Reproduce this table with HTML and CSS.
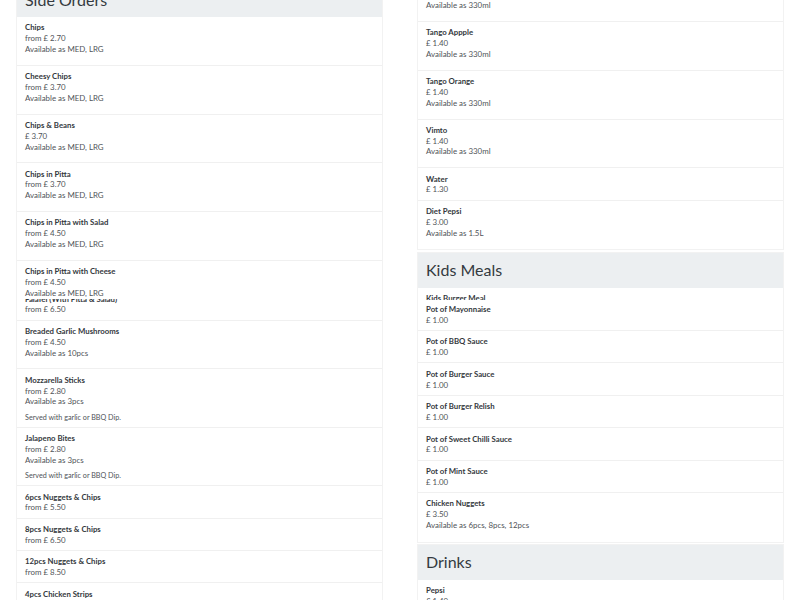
FILE: index.html
```html
<!DOCTYPE html>
<html lang="en">
<head>
<meta charset="utf-8">
<title>Menu</title>
<link rel="stylesheet" href="styles.css">
</head>
<body>
<div class="menu">
  <div class="col col-left">
    <section class="card">
      <h2 class="card-head">Side Orders</h2>
      <ul class="items">
        <li class="item"><div class="name">Chips</div><div class="price">from £ 2.70</div><div class="avail">Available as MED, LRG</div></li>
        <li class="item"><div class="name">Cheesy Chips</div><div class="price">from £ 3.70</div><div class="avail">Available as MED, LRG</div></li>
        <li class="item"><div class="name">Chips &amp; Beans</div><div class="price">£ 3.70</div><div class="avail">Available as MED, LRG</div></li>
        <li class="item"><div class="name">Chips in Pitta</div><div class="price">from £ 3.70</div><div class="avail">Available as MED, LRG</div></li>
        <li class="item"><div class="name">Chips in Pitta with Salad</div><div class="price">from £ 4.50</div><div class="avail">Available as MED, LRG</div></li>
        <li class="item item-cut"><div class="name">Chips in Pitta with Cheese</div><div class="price">from £ 4.50</div><div class="avail">Available as MED, LRG</div></li>
        <li class="item item-under"><div class="name">Falafel (With Pitta &amp; Salad)</div><div class="price">from £ 6.50</div></li>
        <li class="item"><div class="name">Breaded Garlic Mushrooms</div><div class="price">from £ 4.50</div><div class="avail">Available as 10pcs</div></li>
        <li class="item"><div class="name">Mozzarella Sticks</div><div class="price">from £ 2.80</div><div class="avail">Available as 3pcs</div><p class="desc">Served with garlic or BBQ Dip.</p></li>
        <li class="item"><div class="name">Jalapeno Bites</div><div class="price">from £ 2.80</div><div class="avail">Available as 3pcs</div><p class="desc">Served with garlic or BBQ Dip.</p></li>
        <li class="item"><div class="name">6pcs Nuggets &amp; Chips</div><div class="price">from £ 5.50</div></li>
        <li class="item"><div class="name">8pcs Nuggets &amp; Chips</div><div class="price">from £ 6.50</div></li>
        <li class="item"><div class="name">12pcs Nuggets &amp; Chips</div><div class="price">from £ 8.50</div></li>
        <li class="item"><div class="name">4pcs Chicken Strips</div><div class="price">from £ 4.50</div></li>
      </ul>
    </section>
  </div>
  <div class="col col-right">
    <section class="card">
      <ul class="items">
        <li class="item"><div class="name">7UP</div><div class="price">£ 1.40</div><div class="avail">Available as 330ml</div></li>
        <li class="item"><div class="name">Tango Appple</div><div class="price">£ 1.40</div><div class="avail">Available as 330ml</div></li>
        <li class="item"><div class="name">Tango Orange</div><div class="price">£ 1.40</div><div class="avail">Available as 330ml</div></li>
        <li class="item"><div class="name">Vimto</div><div class="price">£ 1.40</div><div class="avail">Available as 330ml</div></li>
        <li class="item"><div class="name">Water</div><div class="price">£ 1.30</div></li>
        <li class="item"><div class="name">Diet Pepsi</div><div class="price">£ 3.00</div><div class="avail">Available as 1.5L</div></li>
      </ul>
    </section>
    <section class="card">
      <h2 class="card-head">Kids Meals</h2>
      <ul class="items">
        <li class="item item-peek"><div class="name">Kids Burger Meal</div></li>
        <li class="item item-over"><div class="name">Pot of Mayonnaise</div><div class="price">£ 1.00</div></li>
        <li class="item"><div class="name">Pot of BBQ Sauce</div><div class="price">£ 1.00</div></li>
        <li class="item"><div class="name">Pot of Burger Sauce</div><div class="price">£ 1.00</div></li>
        <li class="item"><div class="name">Pot of Burger Relish</div><div class="price">£ 1.00</div></li>
        <li class="item"><div class="name">Pot of Sweet Chilli Sauce</div><div class="price">£ 1.00</div></li>
        <li class="item"><div class="name">Pot of Mint Sauce</div><div class="price">£ 1.00</div></li>
        <li class="item"><div class="name">Chicken Nuggets</div><div class="price">£ 3.50</div><div class="avail">Available as 6pcs, 8pcs, 12pcs</div></li>
      </ul>
    </section>
    <section class="card">
      <h2 class="card-head">Drinks</h2>
      <ul class="items">
        <li class="item"><div class="name">Pepsi</div><div class="price">£ 1.40</div><div class="avail">Available as 330ml</div></li>
      </ul>
    </section>
  </div>
</div>
</body>
</html>
```

FILE: styles.css
```css
html, body {
  margin: 0;
  padding: 0;
  background: #ffffff;
  overflow: hidden;
  height: 600px;
}

body {
  font-family: Lato, "Open Sans", Arial, sans-serif;
  color: #4f5358;
  font-size: 7.9px;
  line-height: 10.8px;
}

.menu {
  display: grid;
  grid-template-columns: 365px 365px;
  column-gap: 36px;
  padding: 0 17px;
  align-items: start;
}

.col-left {
  margin-top: -17.5px;
}

.col-right {
  margin-top: -26.8px;
}

.card {
  background: #ffffff;
  box-shadow: 0 0 0 1px #f2f2f2;
  margin-bottom: 3.6px;
}

.card-head {
  margin: 0;
  height: 34.5px;
  box-sizing: border-box;
  padding: 0 8px;
  background: #eceff1;
  font-weight: 400;
  font-size: 16px;
  line-height: 34.5px;
  color: #343a40;
}

.items {
  list-style: none;
  margin: 0;
  padding: 0;
}

.item {
  padding: 5.4px 8px 4.4px;
  border-bottom: 1px solid #f0f0f0;
}

.item:last-child {
  border-bottom: none;
  padding-bottom: 5.4px;
}

.name {
  font-weight: 700;
  font-size: 7.8px;
  color: #34383d;
}

.avail {
  margin-bottom: 5.6px;
}

.desc {
  margin: 0;
  font-size: 7.2px;
  line-height: 9.7px;
}

.item-cut {
  padding-bottom: 0;
  border-bottom: none;
  position: relative;
  z-index: 1;
}

.item-cut .avail {
  margin-bottom: 0;
}

.item-under {
  overflow: hidden;
  padding-top: 0;
}

.item-under .name {
  margin-top: -5px;
}

.item-peek {
  height: 12.6px;
  box-sizing: border-box;
  overflow: hidden;
  padding-bottom: 0;
  border-bottom: none;
}

.item-over {
  padding-top: 4px;
}
```
